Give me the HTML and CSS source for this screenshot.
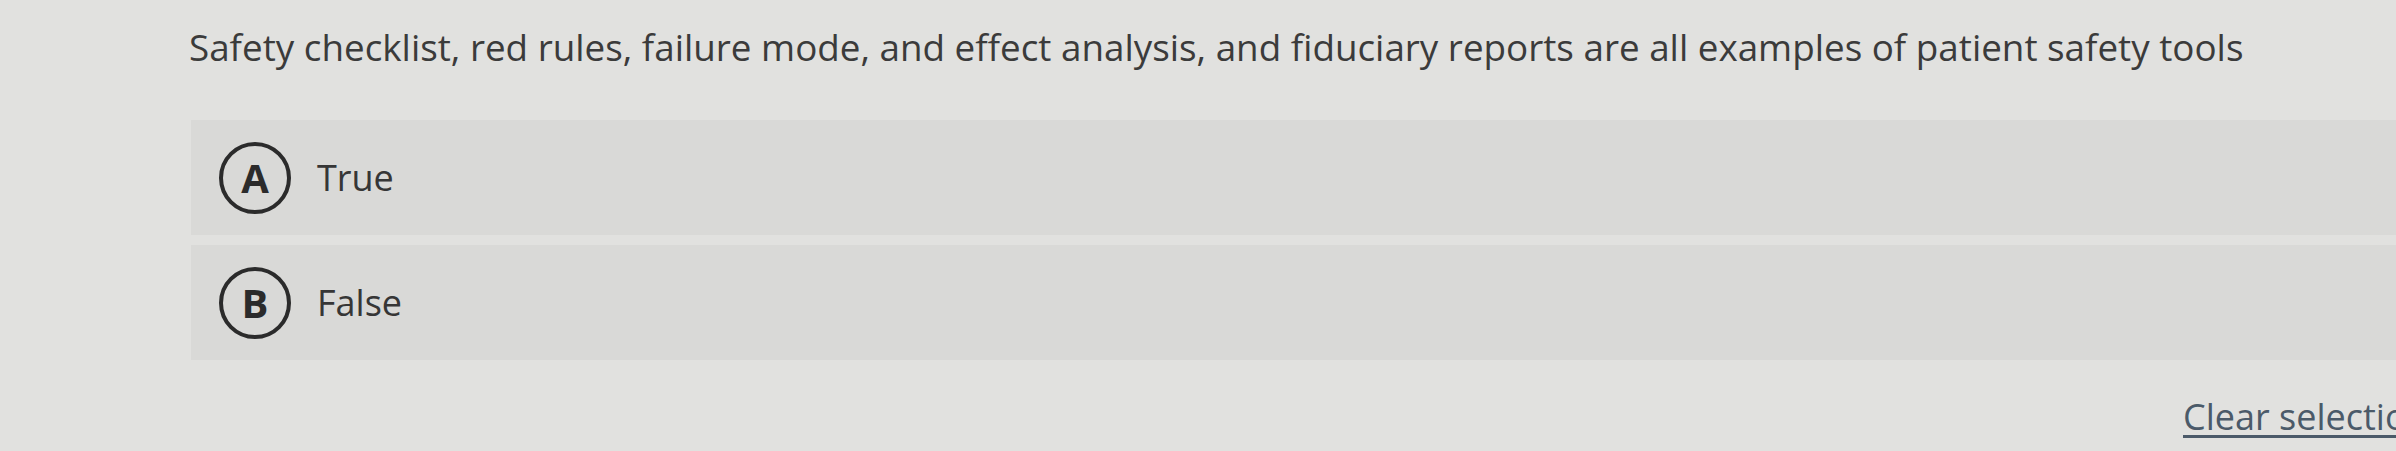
FILE: index.html
```html
<!DOCTYPE html>
<html lang="en">
<head>
<meta charset="utf-8">
<title>Question</title>
<link rel="stylesheet" href="styles.css">
</head>
<body>
<main class="page">
  <p class="question">Safety checklist, red rules, failure mode, and effect analysis, and fiduciary reports are all examples of patient safety tools</p>
  <div class="options">
    <div class="option">
      <span class="badge">A</span>
      <span class="label">True</span>
    </div>
    <div class="option">
      <span class="badge">B</span>
      <span class="label">False</span>
    </div>
  </div>
  <div class="footer">
    <a class="clear" href="#">Clear selection</a>
  </div>
</main>
</body>
</html>
```

FILE: styles.css
```css
html, body {
  margin: 0;
  padding: 0;
  width: 2396px;
  height: 451px;
  overflow: hidden;
  background: #e1e1df;
}
.page {
  font-family: "Open Sans", "Noto Sans", sans-serif;
  color: #3a3a3a;
  padding-top: 23px;
}
.question {
  margin: 0 0 0 189px;
  font-size: 36.8px;
  line-height: 49px;
  white-space: nowrap;
  color: #3b3b3b;
}
.options {
  margin: 48px 0 0 191px;
  display: flex;
  flex-direction: column;
  gap: 10px;
}
.option {
  height: 115px;
  background: #d9d9d7;
  display: flex;
  align-items: center;
  padding-left: 28px;
  gap: 26px;
}
.badge {
  box-sizing: border-box;
  width: 72px;
  height: 72px;
  border: 4px solid #2b2b2b;
  border-radius: 50%;
  display: flex;
  align-items: center;
  justify-content: center;
  font-weight: 700;
  font-size: 40px;
  color: #2b2b2b;
  line-height: 1;
}
.label {
  font-size: 36px;
  color: #363636;
  line-height: 49px;
}
.footer {
  padding: 32px 0 0 2183px;
  white-space: nowrap;
}
.clear {
  font-size: 36px;
  line-height: 49px;
  color: #4b5a69;
  text-decoration: underline;
  text-decoration-thickness: 3px;
  text-underline-offset: 5px;
}
```
